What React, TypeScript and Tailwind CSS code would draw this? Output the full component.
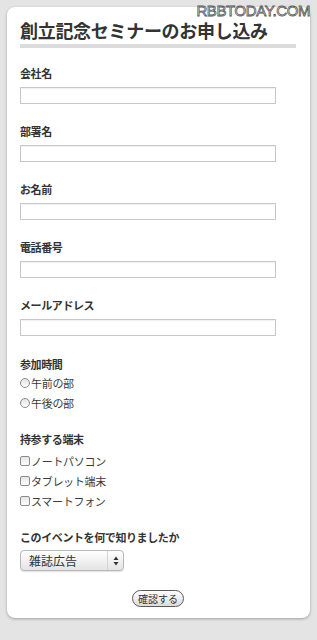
import type { ReactNode } from 'react';

const fields = ['会社名', '部署名', 'お名前', '電話番号', 'メールアドレス'];
const times = ['午前の部', '午後の部'];
const devices = ['ノートパソコン', 'タブレット端末', 'スマートフォン'];

function Label({ children, className = '' }: { children: ReactNode; className?: string }) {
  return (
    <p className={`text-[11px] leading-[14px] font-bold tracking-[-0.4px] text-[#333] ${className}`}>
      {children}
    </p>
  );
}

export default function App() {
  return (
    <div className="relative h-[640px] w-full bg-[#e4e4e4] p-[7px] font-['Noto_Sans_CJK_JP','Noto_Sans',sans-serif]">
      <div className="flex w-[303px] flex-col rounded-[8px] bg-white pt-[13px] pr-[14px] pb-[11px] pl-[13px] shadow-[0_1px_3px_rgba(0,0,0,0.3)]">
        <h1 className="text-[18px] leading-[20px] font-bold tracking-[-0.3px] text-[#333]">
          創立記念セミナーのお申し込み
        </h1>
        <div className="mt-[4px] h-[4px] w-full bg-[#dcdcdc]" />

        <div className="mt-[18px] flex flex-col gap-[20px]">
          {fields.map((f) => (
            <div key={f}>
              <Label>{f}</Label>
              <input
                type="text"
                className="mt-[7px] block h-[17px] w-[256px] border border-[#c8c8c8] bg-white shadow-[inset_0_1px_1px_rgba(0,0,0,0.06)] outline-none"
              />
            </div>
          ))}
        </div>

        <Label className="mt-[21px]">参加時間</Label>
        <div className="mt-[2px] flex flex-col">
          {times.map((t) => (
            <label key={t} className="flex h-[20px] items-center text-[11px] tracking-[-0.3px] text-[#3a3a3a]">
              <input
                type="radio"
                name="time"
                className="mr-[1px] h-[10px] w-[10px] appearance-none rounded-full border border-[#8c8c8c] bg-gradient-to-b from-[#e2e2e2] to-white"
              />
              {t}
            </label>
          ))}
        </div>

        <Label className="mt-[19px]">持参する端末</Label>
        <div className="mt-[5px] flex flex-col">
          {devices.map((d) => (
            <label key={d} className="flex h-[20px] items-center text-[11px] tracking-[-0.3px] text-[#3a3a3a]">
              <input
                type="checkbox"
                className="mr-[1px] h-[10px] w-[10px] appearance-none rounded-[2px] border border-[#8c8c8c] bg-gradient-to-b from-[#e6e6e6] to-white"
              />
              {d}
            </label>
          ))}
        </div>

        <Label className="mt-[19px]">このイベントを何で知りましたか</Label>
        <div className="mt-[6px] flex h-[21px] w-[104px] items-center rounded-[4px] border border-[#b8b8b8] bg-gradient-to-b from-white to-[#e4e4e4] shadow-[0_1px_1px_rgba(0,0,0,0.12)]">
          <span className="flex-1 pl-[8px] text-[12px] leading-none text-[#333]">雑誌広告</span>
          <span className="flex h-full w-[16px] items-center justify-center border-l border-[#d4d4d4]">
            <svg width="6" height="10" viewBox="0 0 6 10">
              <path d="M3 0.5 L5.5 4 L0.5 4 Z" fill="#333" />
              <path d="M3 9.5 L5.5 6 L0.5 6 Z" fill="#333" />
            </svg>
          </span>
        </div>

        <div className="mt-[19px] flex justify-center">
          <button className="h-[17px] rounded-full border border-[#5a5a5a] bg-gradient-to-b from-white to-[#dcdcdc] px-[5px] text-[10px] leading-none text-[#333]">
            確認する
          </button>
        </div>
      </div>

      <span className="absolute top-[2px] right-[7px] block font-['Liberation_Sans',sans-serif] text-[15px] leading-[17px] tracking-[-0.4px] text-white [-webkit-text-stroke:0.8px_#555]">
        RBBTODAY.COM
      </span>
    </div>
  );
}
